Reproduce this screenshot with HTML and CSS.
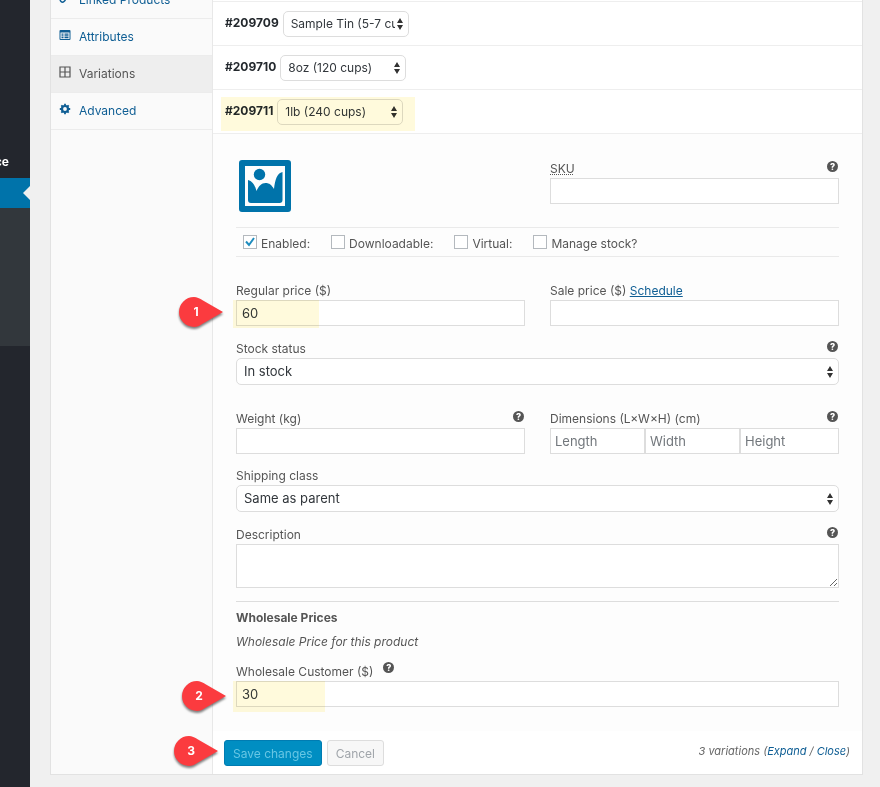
FILE: index.html
```html
<!DOCTYPE html>
<html lang="en">

<head>
  <meta charset="UTF-8" />
  <meta name="viewport" content="width=device-width, initial-scale=1.0" />
  <title>Product data</title>
  <link rel="stylesheet" href="styles.css">
</head>

<body>
  <nav class="admin-menu">
    <div class="menu-top">ce</div>
    <div class="menu-current"></div>
    <div class="submenu"></div>
  </nav>

  <main class="content">
    <div class="panel">
      <ul class="tabs">
        <li>
          <a href="#">
            <svg viewBox="0 0 12 12"><path d="M5 7.5 7.5 5M5.5 4 7 2.500a2 2 0 0 1 3 3L8.500 7M6.500 8 5 9.500a2 2 0 0 1-3-3L3.500 5" fill="none" stroke="currentColor" stroke-width="1.500" /></svg>
            Linked Products
          </a>
        </li>
        <li>
          <a href="#">
            <svg viewBox="0 0 12 12"><path fill-rule="evenodd" d="M1.500 1h9q1 0 1 1v8q0 1-1 1h-9q-1 0-1-1V2q0-1 1-1zM1.500 3.500v6.500h9V3.500zM2.500 4.500h2v1.300h-2zM5.500 4.500h4v1.300h-4zM2.500 6.300h2v1.200h-2zM5.500 6.300h4v1.200h-4zM2.500 8.100h2v1.200h-2zM5.500 8.100h4v1.200h-4z" fill="currentColor" /></svg>
            Attributes
          </a>
        </li>
        <li class="active">
          <a href="#">
            <svg viewBox="0 0 12 12"><path d="M1 1h10v10H1zM6 1v10M1 6h10" fill="none" stroke="currentColor" stroke-width="1.200" /></svg>
            Variations
          </a>
        </li>
        <li>
          <a href="#">
            <svg viewBox="0 0 12 12"><circle cx="6" cy="6" r="3" fill="none" stroke="currentColor" stroke-width="2.200" /><path d="M6 .8v2M6 9.200v2M.8 6h2M9.200 6h2M2.300 2.300l1.400 1.400M8.300 8.300l1.400 1.400M9.700 2.300 8.300 3.700M3.700 8.300 2.300 9.700" stroke="currentColor" stroke-width="1.800" /></svg>
            Advanced
          </a>
        </li>
      </ul>

      <form class="variations">
        <div class="variation">
          <label for="v1">#209709</label>
          <select id="v1"><option>Sample Tin (5-7 cups)</option></select>
        </div>
        <div class="variation">
          <label for="v2">#209710</label>
          <select id="v2"><option>8oz (120 cups)</option></select>
        </div>
        <div class="variation">
          <label for="v3">#209711</label>
          <select id="v3"><option>1lb (240 cups)</option></select>
          <span class="highlight highlight-row"></span>
        </div>

        <div class="data">
          <div class="row row-top">
            <a href="#" class="upload" aria-label="Upload image">
              <svg viewBox="0 0 52 52">
                <path fill-rule="evenodd" d="M3 0h46q3 0 3 3v46q0 3-3 3H3q-3 0-3-3V3q0-3 3-3zM6 6v40h40V6z" />
                <circle cx="20.500" cy="14.500" r="5.700" />
                <path d="M9 20c4 1 7 5 8.500 11 2-5 5-8 9-8s6 2 8.500 6c1-9 3-16 8.500-17v28q0 3-3 3H12q-3 0-3-3z" />
              </svg>
            </a>
            <div class="field">
              <div class="label"><label for="sku"><abbr title="Stock Keeping Unit">SKU</abbr></label><span class="help">?</span></div>
              <input type="text" id="sku">
            </div>
          </div>

          <div class="options">
            <label><input type="checkbox" checked>Enabled:</label>
            <label><input type="checkbox">Downloadable:</label>
            <label><input type="checkbox">Virtual:</label>
            <label><input type="checkbox">Manage stock?</label>
          </div>

          <div class="row">
            <div class="field">
              <div class="label"><label for="regular">Regular price ($)</label></div>
              <input type="text" id="regular" value="60">
              <span class="highlight"></span>
              <span class="pin pin-field"><svg viewBox="0 0 44 30"><path d="M44 15 24 26.500Q19 30 15 30A15 15 0 0 1 15 0Q19 0 24 3.500Z" /></svg><b>1</b></span>
            </div>
            <div class="field">
              <div class="label"><span><label for="sale">Sale price ($)</label> <a href="#">Schedule</a></span></div>
              <input type="text" id="sale">
            </div>
          </div>

          <div class="field">
            <div class="label"><label for="stock">Stock status</label><span class="help">?</span></div>
            <select id="stock"><option>In stock</option></select>
          </div>

          <div class="row row-weight">
            <div class="field">
              <div class="label"><label for="weight">Weight (kg)</label><span class="help">?</span></div>
              <input type="text" id="weight">
            </div>
            <div class="field">
              <div class="label"><label for="length">Dimensions (L×W×H) (cm)</label><span class="help">?</span></div>
              <div class="dimensions">
                <input type="text" id="length" placeholder="Length">
                <input type="text" aria-label="Width" placeholder="Width">
                <input type="text" aria-label="Height" placeholder="Height">
              </div>
            </div>
          </div>

          <div class="field">
            <div class="label"><label for="shipping">Shipping class</label></div>
            <select id="shipping"><option>Same as parent</option></select>
          </div>

          <div class="field">
            <div class="label"><label for="description">Description</label><span class="help">?</span></div>
            <textarea id="description"></textarea>
          </div>

          <div class="wholesale">
            <h4>Wholesale Prices</h4>
            <p>Wholesale Price for this product</p>
            <div class="field">
              <div class="label label-inline"><label for="wholesale">Wholesale Customer ($)</label><span class="help">?</span></div>
              <input type="text" id="wholesale" value="30">
              <span class="highlight highlight-wholesale"></span>
              <span class="pin pin-wholesale"><svg viewBox="0 0 44 30"><path d="M44 15 24 26.500Q19 30 15 30A15 15 0 0 1 15 0Q19 0 24 3.500Z" /></svg><b>2</b></span>
            </div>
          </div>
        </div>

        <div class="toolbar">
          <span class="pin pin-toolbar"><svg viewBox="0 0 44 30"><path d="M44 15 24 26.500Q19 30 15 30A15 15 0 0 1 15 0Q19 0 24 3.500Z" /></svg><b>3</b></span>
          <button type="button" class="button primary" disabled>Save changes</button>
          <button type="button" class="button" disabled>Cancel</button>
          <span class="count">3 variations (<a href="#">Expand</a> / <a href="#">Close</a>)</span>
        </div>
      </form>
    </div>
  </main>
</body>

</html>
```
FILE: styles.css
```css
* {
  margin: 0;
  padding: 0;
  box-sizing: border-box;
}

body {
  display: flex;
  min-height: 100vh;
  background: #f0f0f0;
  color: #555;
  font-family: Inter, "Liberation Sans", sans-serif;
  font-size: 12px;
  overflow-x: hidden;
}

a {
  color: #0f5e94;
}

/* admin menu */
.admin-menu {
  flex: none;
  width: 30px;
  background: #23262d;
}

.menu-top {
  display: flex;
  justify-content: flex-end;
  width: 9px;
  height: 178px;
  padding-top: 153px;
  overflow: hidden;
  color: #fff;
  font-size: 12px;
  font-weight: 700;
  line-height: 18px;
}

.menu-current {
  display: flex;
  align-items: center;
  justify-content: flex-end;
  height: 30px;
  background: #0073aa;
}

.menu-current::after {
  content: "";
  border: 7px solid transparent;
  border-left: 0;
  border-right-color: #f0f0f0;
}

.submenu {
  height: 138px;
  background: #32373c;
}

/* product data panel */
.content {
  flex: 1;
  padding: 0 17px 12px 20px;
}

.panel {
  display: flex;
  border: 1px solid #e2e2e2;
  border-top: 0;
  background: #fff;
}

.tabs {
  flex: none;
  width: 162px;
  overflow: hidden;
  list-style: none;
  background: #fafafa;
  border-right: 1px solid #e8e8e8;
}

.tabs li:first-child {
  margin-top: -18px;
}

.tabs a {
  display: flex;
  gap: 8px;
  height: 37px;
  padding: 9px 8px;
  border-bottom: 1px solid #ececec;
  line-height: 18px;
  text-decoration: none;
}

.tabs .active a {
  background: #eee;
  color: #555;
}

.tabs svg {
  width: 12px;
  height: 12px;
  margin-top: 1px;
}

.variations {
  flex: 1;
  min-width: 0;
  border-top: 1px solid #fff;
}

.variation {
  position: relative;
  display: flex;
  gap: 4px;
  padding: 9px 12px 8px;
  border-top: 1px solid #eee;
}

.variation label {
  color: #23282d;
  font-weight: 700;
  line-height: 24px;
}

.variation select {
  width: 126px;
  padding-bottom: 1px;
}

/* form */
.data {
  padding: 25px 23px 24px;
  border-top: 1px solid #eee;
  background: #fdfdfd;
}

.row {
  display: grid;
  grid-template-columns: 1fr 1fr;
  gap: 25px;
}

.row-top {
  margin-bottom: 15px;
}

.row-weight {
  margin-top: 24px;
}

.upload {
  padding: 1px 0 0 3px;
}

.upload svg {
  display: block;
  width: 52px;
  height: 52px;
  fill: #0073aa;
}

.field {
  position: relative;
  min-width: 0;
  margin-bottom: 13px;
}

.row-weight .field {
  margin-bottom: 12px;
}

.row-top .field {
  margin-bottom: 0;
}

.label {
  display: flex;
  justify-content: space-between;
  line-height: 19px;
}

.label-inline {
  justify-content: flex-start;
  gap: 10px;
}

.help {
  width: 11px;
  height: 11px;
  margin: 2px 1px 0 0;
  border-radius: 50%;
  background: #555;
  color: #fff;
  font-size: 9px;
  font-weight: 800;
  line-height: 11px;
  text-align: center;
}

.label-inline .help {
  margin-top: 0;
}

input[type="text"],
select,
textarea {
  display: block;
  width: 100%;
  height: 26px;
  padding: 0 5px;
  border: 1px solid #ddd;
  border-radius: 0;
  background-color: #fff;
  color: #32373c;
  font-family: inherit;
  font-size: 13px;
}

input::placeholder {
  color: #72777c;
}

select {
  padding: 0 13px 0 7px;
  border-radius: 5px;
  appearance: none;
  background: #fff url("data:image/svg+xml,%3Csvg xmlns='http://www.w3.org/2000/svg' width='6' height='12'%3E%3Cpath d='M0 5 3 0 6 5zM0 7h6L3 12z' fill='%23333'/%3E%3C/svg%3E") no-repeat right 5px center;
}

.variation select {
  font-size: 12px;
}

.field select {
  height: 27px;
  border-radius: 5px;
  padding: 0 13px 1px 7px;
}

textarea {
  height: 44px;
  resize: vertical;
}

.options {
  display: flex;
  gap: 21px;
  height: 30px;
  margin-bottom: 24px;
  padding-left: 7px;
  border: solid #eaeaea;
  border-width: 1px 0;
}

.options label {
  display: flex;
  gap: 4px;
  line-height: 32px;
}

.options input {
  width: 14px;
  height: 14px;
  margin-top: 7px;
  border: 1px solid #b4b9be;
  background: #fff;
  appearance: none;
}

.options input:checked {
  background: #fff url("data:image/svg+xml,%3Csvg xmlns='http://www.w3.org/2000/svg' width='12' height='12'%3E%3Cpath d='M2 5.500 5 9 10 2' fill='none' stroke='%231e8cbe' stroke-width='2'/%3E%3C/svg%3E") no-repeat center;
}

.dimensions {
  display: grid;
  grid-template-columns: 95px 95px 1fr;
}

.dimensions input {
  padding: 0 4px;
}

.wholesale {
  padding-top: 7px;
  border-top: 1px solid #ddd;
}

.wholesale h4 {
  font-size: 12px;
  font-weight: 700;
  line-height: 18px;
}

.wholesale p {
  margin: 6px 0 11px;
  font-style: italic;
  line-height: 18px;
}

.wholesale .field {
  margin: 0;
}

/* footer buttons */
.toolbar {
  position: relative;
  display: flex;
  align-items: flex-start;
  gap: 5px;
  padding: 9px 12px 8px 11px;
}

.button {
  height: 26px;
  padding: 0 8px;
  border: 1px solid #ddd;
  border-radius: 3px;
  background: #f7f7f7;
  color: #a0a5aa;
  font-family: inherit;
  font-size: 12px;
}

.button.primary {
  border-color: #007cb2;
  background: #008ec2;
  color: #66c6e4;
}

.count {
  margin-left: auto;
  color: #666;
  font-size: 11px;
  font-style: italic;
  line-height: 23px;
}

.count a {
  text-decoration: none;
}

/* callouts */
.highlight {
  position: absolute;
  top: 19px;
  left: -3px;
  width: 86px;
  height: 28px;
  background: #fffadc;
  mix-blend-mode: multiply;
  pointer-events: none;
}

.highlight-wholesale {
  width: 92px;
  height: 31px;
}

.highlight-row {
  top: 7px;
  left: 8px;
  width: 194px;
  height: 34px;
}

.pin {
  position: absolute;
  z-index: 1;
  width: 44px;
  height: 30px;
  color: #fff;
  font-size: 12px;
  line-height: 30px;
}

.pin svg {
  position: absolute;
  inset: 0;
  fill: #fb3b3f;
  filter: drop-shadow(0 2px 1px rgba(0, 0, 0, .5));
}

.pin b {
  position: relative;
  display: block;
  width: 34px;
  text-align: center;
}

.pin-field {
  top: 16px;
  left: -57px;
}

.pin-wholesale {
  top: 19px;
  left: -54px;
}

.pin-toolbar {
  top: 5px;
  left: -39px;
}
```
